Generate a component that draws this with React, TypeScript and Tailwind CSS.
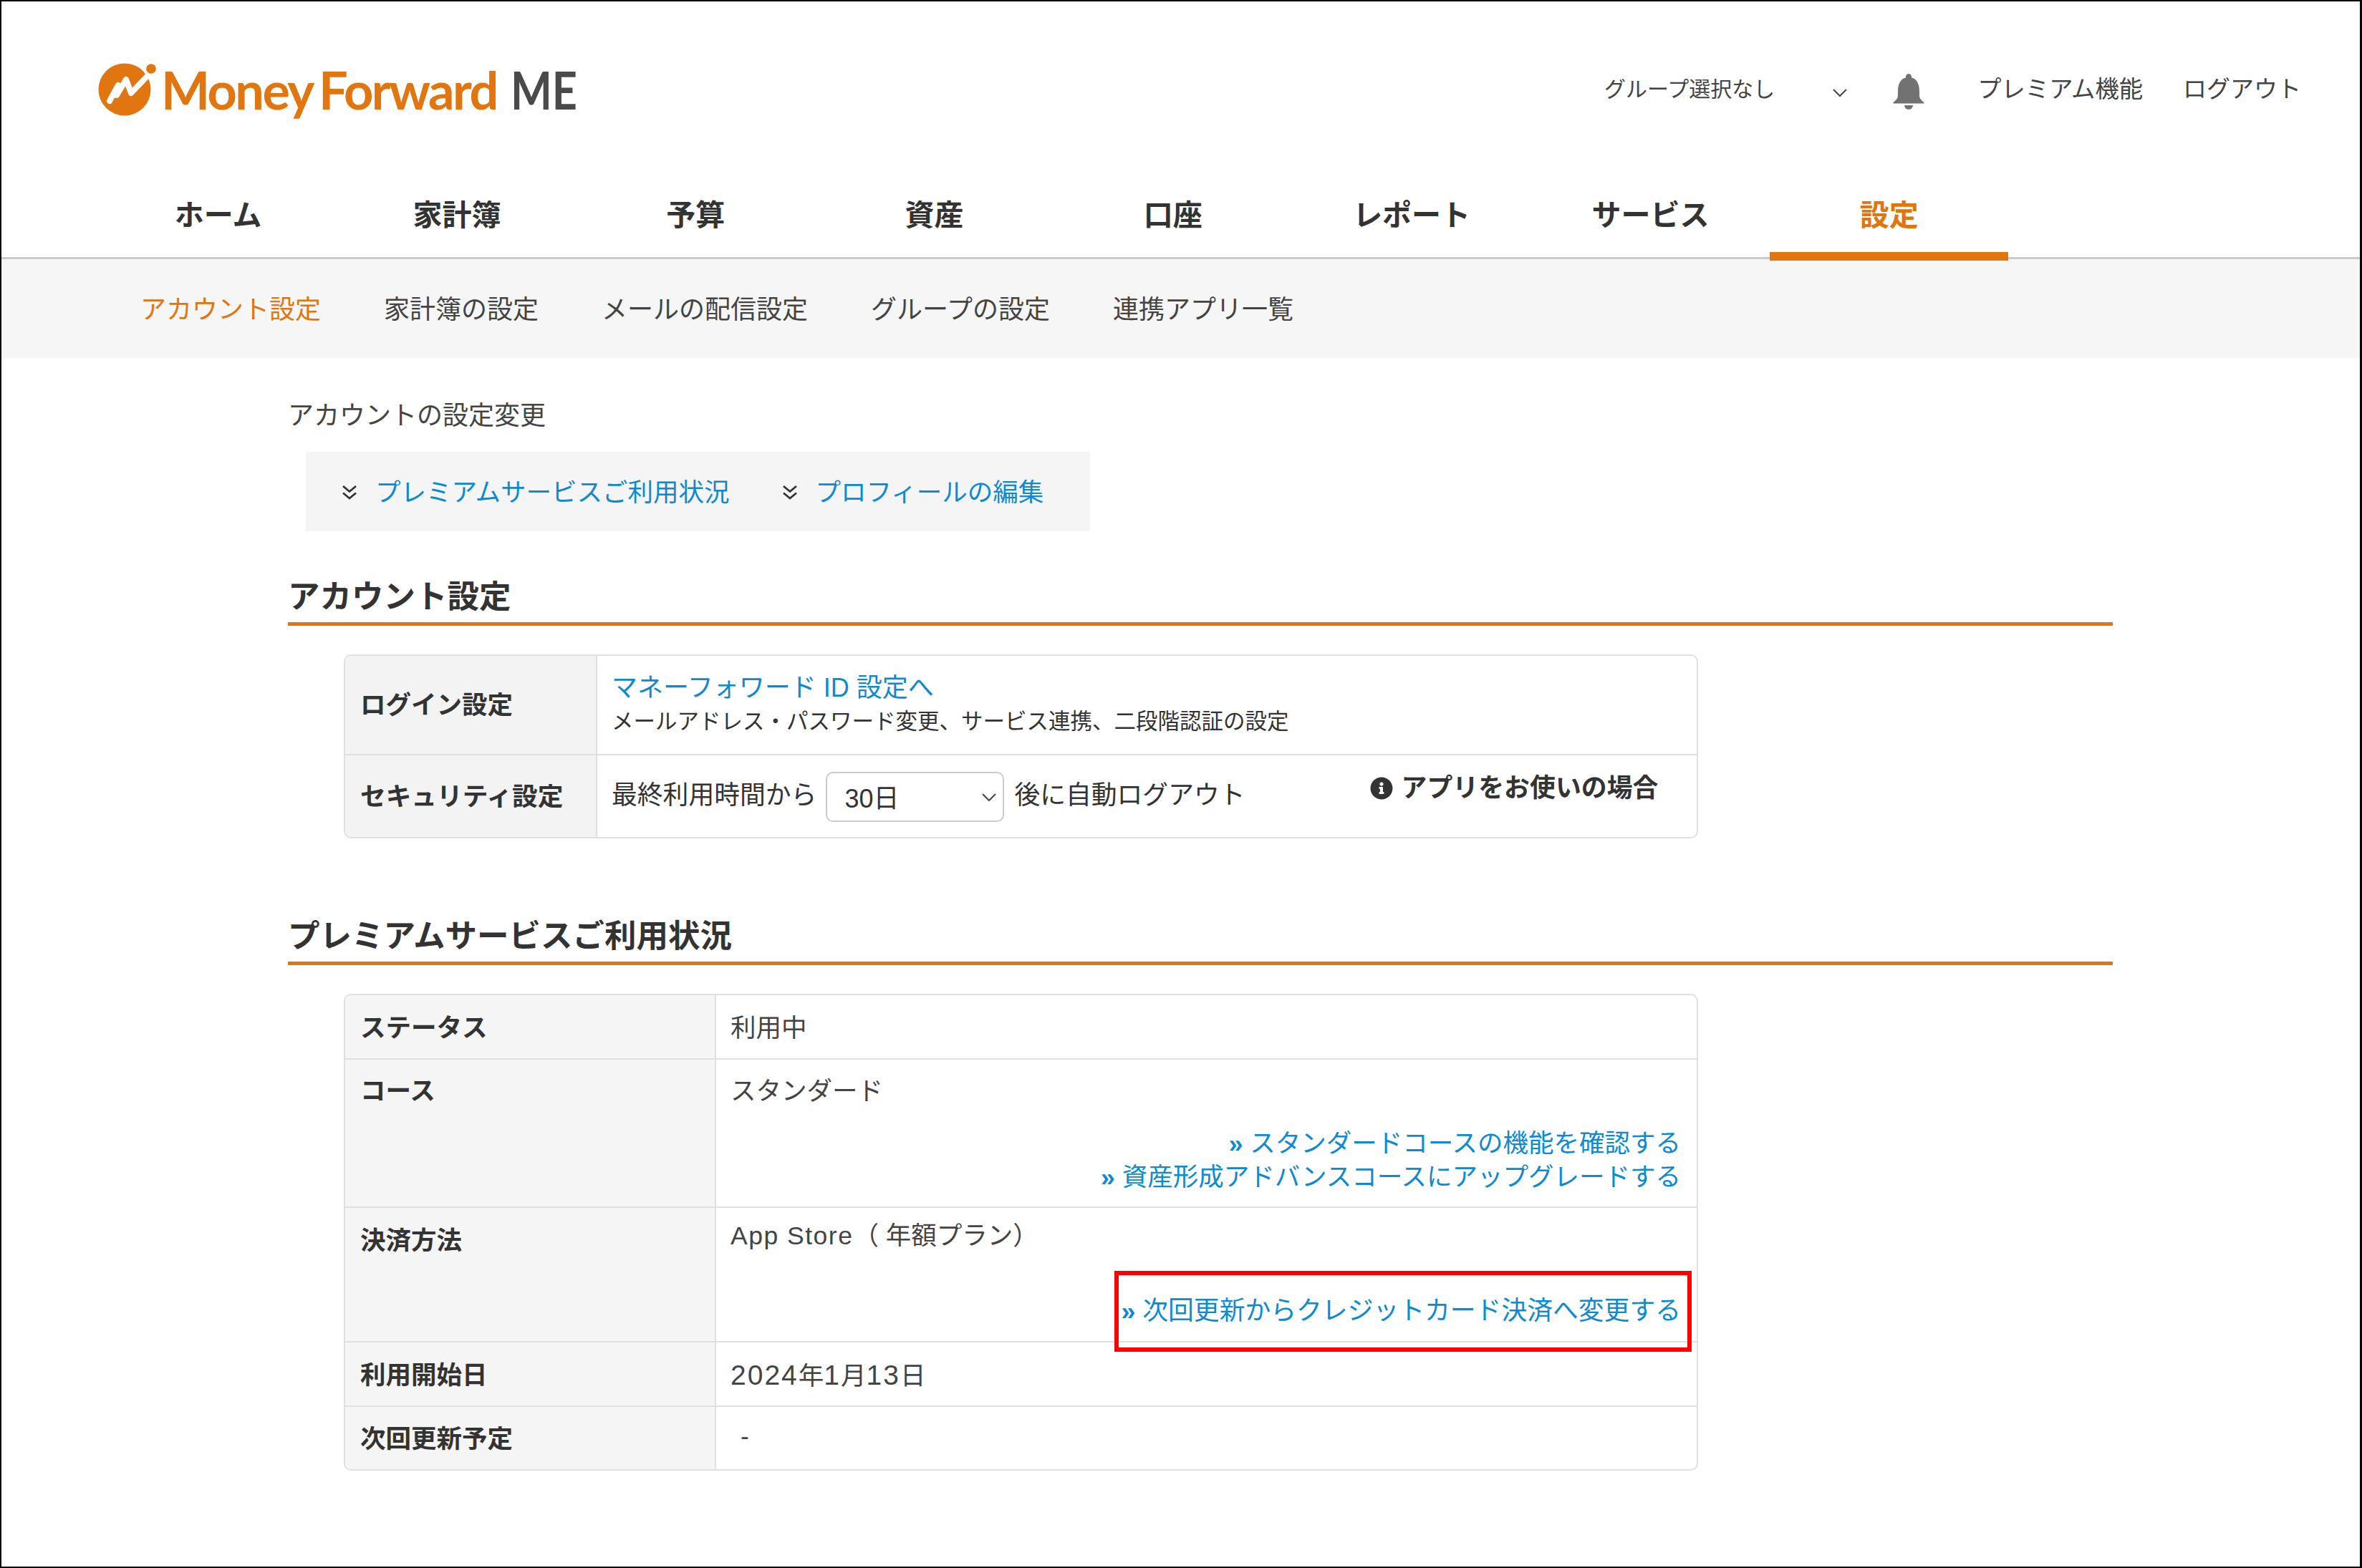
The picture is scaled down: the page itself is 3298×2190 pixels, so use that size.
import type { ReactNode } from "react";
import { FaInfoCircle } from "react-icons/fa";

const navItems = ["ホーム", "家計簿", "予算", "資産", "口座", "レポート", "サービス", "設定"];
const subItems = ["アカウント設定", "家計簿の設定", "メールの配信設定", "グループの設定", "連携アプリ一覧"];

function Logo() {
  return (
    <div className="mb-[5px] flex items-center">
      <svg width="90" height="90" viewBox="0 0 90 90" className="shrink-0">
        <circle cx="44" cy="45" r="36.5" fill="#e1750f" />
        <circle cx="81" cy="16" r="11" fill="#fff" />
        <circle cx="81" cy="16" r="6.8" fill="#e1750f" />
        <path
          d="M23 61 L35 39 L33 53 L46 31 L53 50 L75 27"
          fill="none"
          stroke="#fff"
          strokeWidth="8"
          strokeLinecap="round"
          strokeLinejoin="round"
        />
      </svg>
      <span className="ml-[5px] w-[470px] whitespace-nowrap font-['Lato',sans-serif] text-[72px] font-bold leading-[90px] tracking-[-2.5px] text-[#e1750f] [word-spacing:-5px]">
        Money Forward
      </span>
      <span className="ml-[18px] inline-block origin-left scale-x-[0.85] whitespace-nowrap font-['Lato',sans-serif] text-[72px] font-bold leading-[90px] text-[#4a4a4a]">
        ME
      </span>
    </div>
  );
}

function Bell() {
  return (
    <svg width="70" height="70" viewBox="0 0 70 70" className="shrink-0">
      <path
        d="M35 8a4.5 4.5 0 0 1 4 5.500C46 15 50 22 50 32V38C50 43 53 45 56.500 48V49.500H13.500V48C17 45 20 43 20 38V32C20 22 24 15 31 13.500A4.500 4.500 0 0 1 35 8Z"
        fill="#727272"
      />
      <path d="M29 52H41A6 6 0 0 1 29 52Z" fill="#727272" />
    </svg>
  );
}

function DoubleChevron() {
  return (
    <svg width="22" height="22" viewBox="0 0 22 22" className="shrink-0" fill="none" stroke="#333" strokeWidth="2.8">
      <path d="M2 2L11 9.500L20 2" />
      <path d="M2 11.500L11 19L20 11.500" />
    </svg>
  );
}

function Chevron({ className }: { className?: string }) {
  return (
    <svg width="22" height="13" viewBox="0 0 22 13" className={className} fill="none" stroke="#444" strokeWidth="2">
      <path d="M2 2L11 11L20 2" />
    </svg>
  );
}

function SectionTitle({ children, className }: { children: string; className?: string }) {
  return (
    <h2 className={`w-[2548px] border-b-[5px] border-[#e1750f] pb-[13px] text-[44.500px] font-bold leading-[44px] text-[#333] ${className ?? ""}`}>
      {children}
    </h2>
  );
}

function TextLink({ children, className }: { children: ReactNode; className?: string }) {
  return <a className={`whitespace-nowrap leading-[36px] text-[#0f8ad0] ${className ?? ""}`}>{children}</a>;
}

export default function App() {
  return (
    <div className="relative h-[2190px] w-[3298px] overflow-hidden border-2 border-r-[3px] border-black bg-white font-['Liberation_Sans','Noto_Sans_CJK_JP',sans-serif] text-[#333]">
      <header>
        <div className="flex h-[250px] items-center justify-between pl-[128px] pr-[82px]">
          <Logo />
          <div className="mb-[4px] flex items-center">
            <span className="text-[30px] leading-[36px] text-[#444]">グループ選択なし</span>
            <Chevron className="ml-[80px] mt-[8px]" />
            <div className="ml-[50px] mt-[10px]"><Bell /></div>
            <span className="ml-[61px] text-[33.300px] leading-[36px] text-[#444]">プレミアム機能</span>
            <span className="ml-[56px] text-[33px] leading-[36px] text-[#444]">ログアウト</span>
          </div>
        </div>
        <nav className="flex h-[110px] border-b-[3px] border-[#c9c9c9] pl-[136px]">
          {navItems.map((item) => (
            <div
              key={item}
              className={`relative flex h-[107px] w-[333.300px] items-center justify-center pb-[10px] text-[41px] font-bold leading-[48px] ${item === "設定" ? "text-[#e1750f]" : "text-[#333]"}`}
            >
              {item}
              {item === "設定" && <span className="absolute bottom-[-5px] left-0 h-[12px] w-full bg-[#e1750f]" />}
            </div>
          ))}
        </nav>
        <div className="flex h-[138px] items-center gap-[88px] bg-[#f6f6f6] pl-[194px] pt-[4px]">
          {subItems.map((item, i) => (
            <a key={item} className={`text-[36px] leading-[40px] ${i === 0 ? "text-[#e1750f]" : "text-[#444]"}`}>
              {item}
            </a>
          ))}
        </div>
      </header>

      <main className="pl-[400px]">
        <p className="mt-[63px] text-[36px] leading-[36px] text-[#444]">アカウントの設定変更</p>
        <div className="ml-[25px] mt-[32px] flex h-[111px] w-[1095px] items-center bg-[#f5f5f5] pl-[50px] pt-[3px]">
          <DoubleChevron />
          <TextLink className="ml-[25px] text-[35.500px]">プレミアムサービスご利用状況</TextLink>
          <div className="ml-[73px]"><DoubleChevron /></div>
          <TextLink className="ml-[25px] text-[35.500px]">プロフィールの編集</TextLink>
        </div>

        <SectionTitle className="mt-[70px]">アカウント設定</SectionTitle>
        <div className="ml-[78px] mt-[40px] w-[1891px] overflow-hidden rounded-[10px] border-2 border-[#e0e0e0]">
          <div className="flex h-[139px] border-b-2 border-[#e0e0e0]">
            <div className="flex w-[352px] items-center border-r-2 border-[#e0e0e0] bg-[#f3f3f3] pl-[21px] pt-[3px] text-[35.500px] font-bold">ログイン設定</div>
            <div className="pl-[20px] pt-[27px]">
              <a className="block text-[36px] leading-[36px] text-[#0f8ad0]">マネーフォワード ID 設定へ</a>
              <p className="mt-[12px] whitespace-nowrap text-[30.500px] leading-[32px] text-[#333]">メールアドレス・パスワード変更、サービス連携、二段階認証の設定</p>
            </div>
          </div>
          <div className="flex h-[114px]">
            <div className="flex w-[352px] items-center border-r-2 border-[#e0e0e0] bg-[#f3f3f3] pl-[21px] pt-[4px] text-[35.700px] font-bold">セキュリティ設定</div>
            <div className="flex flex-1 items-start">
              <span className="ml-[20px] mt-[38px] whitespace-nowrap text-[35.800px] leading-[36px]">最終利用時間から</span>
              <div className="ml-[13px] mt-[23px] flex h-[70px] w-[249px] items-center justify-between rounded-[10px] border-2 border-[#ccc] pl-[24px] pr-[8px] text-[36px] leading-[36px]">
                <span className="mt-[5px]">30日</span>
                <Chevron />
              </div>
              <span className="ml-[14px] mt-[38px] whitespace-nowrap text-[35.800px] leading-[36px]">後に自動ログアウト</span>
              <div className="ml-[174px] mt-[28px] flex items-center text-[35.900px] font-bold leading-[36px]">
                <FaInfoCircle className="h-[32px] w-[32px] text-[#333]" />
                <span className="ml-[12px] whitespace-nowrap">アプリをお使いの場合</span>
              </div>
            </div>
          </div>
        </div>

        <SectionTitle className="mt-[115px]">プレミアムサービスご利用状況</SectionTitle>
        <div className="ml-[78px] mt-[40px] w-[1891px] overflow-hidden rounded-[10px] border-2 border-[#e0e0e0] text-[35.500px] leading-[36px]">
          <div className="flex h-[90px] border-b-2 border-[#e0e0e0]">
            <div className="w-[518px] border-r-2 border-[#e0e0e0] bg-[#f5f5f5] pl-[21px] pt-[28px] font-bold">ステータス</div>
            <div className="pl-[20px] pt-[28px] text-[#444]">利用中</div>
          </div>
          <div className="flex h-[207px] border-b-2 border-[#e0e0e0]">
            <div className="w-[518px] border-r-2 border-[#e0e0e0] bg-[#f5f5f5] pl-[21px] pt-[26px] font-bold">コース</div>
            <div className="flex flex-1 flex-col pl-[20px] pr-[22px] pt-[26px] text-[#444]">
              <span>スタンダード</span>
              <TextLink className="mt-[37px] self-end"><b>»</b> スタンダードコースの機能を確認する</TextLink>
              <TextLink className="mt-[11px] self-end"><b>»</b> 資産形成アドバンスコースにアップグレードする</TextLink>
            </div>
          </div>
          <div className="flex h-[188px] border-b-2 border-[#e0e0e0]">
            <div className="w-[518px] border-r-2 border-[#e0e0e0] bg-[#f5f5f5] pl-[21px] pt-[28px] font-bold">決済方法</div>
            <div className="flex flex-1 flex-col pl-[20px] pr-[22px] pt-[21px] text-[#444]">
              <span><span className="tracking-[1.500px]">App Store</span>（ 年額プラン）</span>
              <TextLink className="mt-[69px] self-end text-[35.800px]"><b>»</b> 次回更新からクレジットカード決済へ変更する</TextLink>
            </div>
          </div>
          <div className="flex h-[90px] border-b-2 border-[#e0e0e0]">
            <div className="w-[518px] border-r-2 border-[#e0e0e0] bg-[#f5f5f5] pl-[21px] pt-[28px] font-bold">利用開始日</div>
            <div className="pl-[20px] pt-[28px] text-[#444]">
              <span className="text-[39px] tracking-[2px]">2024</span>年<span className="text-[39px] tracking-[2px]">1</span>月<span className="text-[39px] tracking-[2px]">13</span>日
            </div>
          </div>
          <div className="flex h-[87px]">
            <div className="w-[518px] border-r-2 border-[#e0e0e0] bg-[#f5f5f5] pl-[21px] pt-[27px] font-bold">次回更新予定</div>
            <div className="pl-[34px] pt-[23px] text-[#444]">-</div>
          </div>
        </div>
      </main>

      {/* annotation drawn over the page */}
      <div className="absolute left-[1554px] top-[1773px] h-[113px] w-[806px] border-[6px] border-[#ff0000]" />
    </div>
  );
}
